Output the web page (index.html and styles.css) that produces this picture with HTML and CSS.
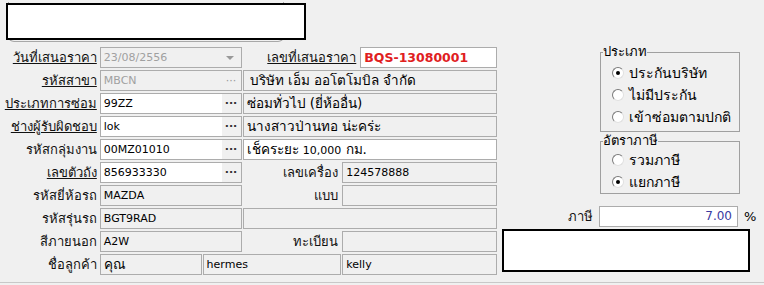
FILE: index.html
```html
<!DOCTYPE html>
<html lang="th">
<head>
    <meta charset="UTF-8">
    <title>ใบเสนอราคา</title>
    <link rel="stylesheet" href="styles.css">
</head>
<body>
    <div class="screen">
        <div class="caption-tab"></div>
        <div class="main">
            <div class="form">
                <div class="row">
                    <label class="lbl link">วันที่เสนอราคา</label>
                    <div class="box w-left disabled">23/08/2556<span class="arrow"></span></div>
                    <label class="lbl link mid-wide">เลขที่เสนอราคา</label>
                    <div class="box w-doc white doc-no">BQS-13080001</div>
                </div>
                <div class="row">
                    <label class="lbl link">รหัสสาขา</label>
                    <div class="box w-left disabled">MBCN<span class="dots">···</span></div>
                    <div class="box w-mid ro th indent">บริษัท เอ็ม ออโตโมบิล จำกัด</div>
                </div>
                <div class="row">
                    <label class="lbl link">ประเภทการซ่อม</label>
                    <div class="box w-left white">99ZZ<span class="dots">···</span></div>
                    <div class="box w-mid ro th">ซ่อมทั่วไป (ยี่ห้ออื่น)</div>
                </div>
                <div class="row">
                    <label class="lbl link">ช่างผู้รับผิดชอบ</label>
                    <div class="box w-left white">lok<span class="dots">···</span></div>
                    <div class="box w-mid ro th">นางสาวป่านทอ น่ะคร่ะ</div>
                </div>
                <div class="row">
                    <label class="lbl">รหัสกลุ่มงาน</label>
                    <div class="box w-left white">00MZ01010<span class="dots">···</span></div>
                    <div class="box w-mid white th">เช็คระยะ <span class="lat">10,000</span> กม.</div>
                </div>
                <div class="row">
                    <label class="lbl link">เลขตัวถัง</label>
                    <div class="box w-left white">856933330<span class="dots">···</span></div>
                    <label class="lbl mid">เลขเครื่อง</label>
                    <div class="box w-right ro">124578888</div>
                </div>
                <div class="row">
                    <label class="lbl">รหัสยี่ห้อรถ</label>
                    <div class="box w-left ro">MAZDA</div>
                    <label class="lbl mid">แบบ</label>
                    <div class="box w-right ro"></div>
                </div>
                <div class="row">
                    <label class="lbl">รหัสรุ่นรถ</label>
                    <div class="box w-left ro">BGT9RAD</div>
                    <div class="box w-mid ro"></div>
                </div>
                <div class="row">
                    <label class="lbl">สีภายนอก</label>
                    <div class="box w-left ro">A2W</div>
                    <label class="lbl mid">ทะเบียน</label>
                    <div class="box w-right ro"></div>
                </div>
                <div class="row">
                    <label class="lbl">ชื่อลูกค้า</label>
                    <div class="box w-title ro th">คุณ</div>
                    <div class="box w-first ro">hermes</div>
                    <div class="box w-right ro">kelly</div>
                </div>
            </div>
            <div class="side">
                <fieldset class="group">
                    <legend>ประเภท</legend>
                    <div class="radio-row"><span class="radio checked"></span>ประกันบริษัท</div>
                    <div class="radio-row"><span class="radio"></span>ไม่มีประกัน</div>
                    <div class="radio-row"><span class="radio"></span>เข้าซ่อมตามปกติ</div>
                </fieldset>
                <fieldset class="group group-tax">
                    <legend>อัตราภาษี</legend>
                    <div class="radio-row"><span class="radio"></span>รวมภาษี</div>
                    <div class="radio-row"><span class="radio checked"></span>แยกภาษี</div>
                </fieldset>
                <div class="tax-row">
                    <label class="lbl tax-lbl">ภาษี</label>
                    <div class="box w-tax white num">7.00</div>
                    <span class="unit">%</span>
                </div>
                <div class="box w-tax white note"></div>
            </div>
        </div>
        <div class="footer"></div>
        <div class="mask mask-top"></div>
        <div class="mask mask-note"></div>
    </div>
</body>
</html>
```

FILE: styles.css
```css
body { margin: 0; background: #f0f0f0; font-family: Tahoma, "DejaVu Sans", "Noto Sans", sans-serif; font-size: 11px; color: #000; }
.screen { position: relative; width: 764px; height: 285px; overflow: hidden; }
.caption-tab { margin: 2px 0 0 8px; width: 274px; height: 39px; border: 1px solid #a8a8a8; border-top: none; border-radius: 0 0 6px 6px; }
.main { display: flex; margin-top: 3px; }
.form { padding-top: 2px; width: 498px; }
.row { display: flex; height: 21px; margin-bottom: 2px; }
.lbl { width: 97px; padding-right: 3px; text-align: right; line-height: 21px; white-space: nowrap; font-size: 13px; color: #111; }
.lbl.link { text-decoration: underline; }
.lbl.mid { width: 96px; padding-right: 4px; }
.lbl.mid-wide { width: 114px; padding-right: 4px; }
.box { position: relative; box-sizing: border-box; height: 21px; border: 1px solid #acacac; padding: 0 3px; line-height: 19px; white-space: nowrap; overflow: hidden; margin-right: 1px; }
.box.white { background: #fff; }
.box.ro { background: #f0f0f0; }
.box.disabled { background: #f0f0f0; color: #a0a0a0; }
.box.th { font-size: 13.5px; }
.box.indent { padding-left: 6px; }
.lat { font-size: 11px; }
.w-left { width: 142px; }
.w-mid { width: 255px; }
.w-right { width: 155px; }
.w-doc { width: 137px; }
.w-title { width: 102px; }
.w-first { width: 139px; }
.w-tax { width: 139px; }
.doc-no { color: #e0201e; font-weight: bold; font-size: 12.5px; }
.dots { position: absolute; right: 0; top: 0; width: 19px; height: 19px; background: #f0f0f0; text-align: center; color: #333; font-weight: bold; font-size: 11px; }
.disabled .dots { color: #999; font-weight: normal; }
.arrow { position: absolute; right: 7px; top: 8px; border: 4px solid transparent; border-top: 4px solid #999; border-bottom: none; }
.side { margin-left: 102px; width: 164px; }
.group { width: 140px; box-sizing: border-box; margin: 0; padding: 3px 0 3px 1px; border: 1px solid #a0a0a0; font-size: 13px; }
.group legend { padding: 0; margin-left: 1px; line-height: 14px; }
.group-tax { margin-top: 2px; padding-top: 1px; padding-bottom: 0; }
.radio-row { display: flex; align-items: center; height: 22px; padding-left: 10px; font-size: 14px; }
.radio { box-sizing: border-box; width: 12px; height: 12px; margin-right: 5px; border-radius: 50%; background: #fff; border: 1px solid; border-color: #7a7a7a #e0e0e0 #e0e0e0 #7a7a7a; display: flex; align-items: center; justify-content: center; }
.radio.checked::after { content: ""; width: 4px; height: 4px; border-radius: 50%; background: #000; }
.tax-row { display: flex; margin-top: 12px; margin-left: -102px; }
.tax-lbl { width: 95px; padding-right: 6px; }
.num { text-align: right; color: #3a3aa0; padding-right: 5px; font-size: 12px; }
.unit { margin-left: 5px; line-height: 21px; font-size: 13px; }
.note { height: 40px; margin-top: 4px; }
.footer { position: absolute; left: 0; right: 0; top: 282px; border-top: 1px solid #c8c8c8; }
.mask { position: absolute; background: #fff; border: 2px solid #000; box-sizing: border-box; }
.mask-top { left: 6px; top: 3px; width: 300px; height: 37px; }
.mask-note { left: 502px; top: 229px; width: 248px; height: 43px; }
```
